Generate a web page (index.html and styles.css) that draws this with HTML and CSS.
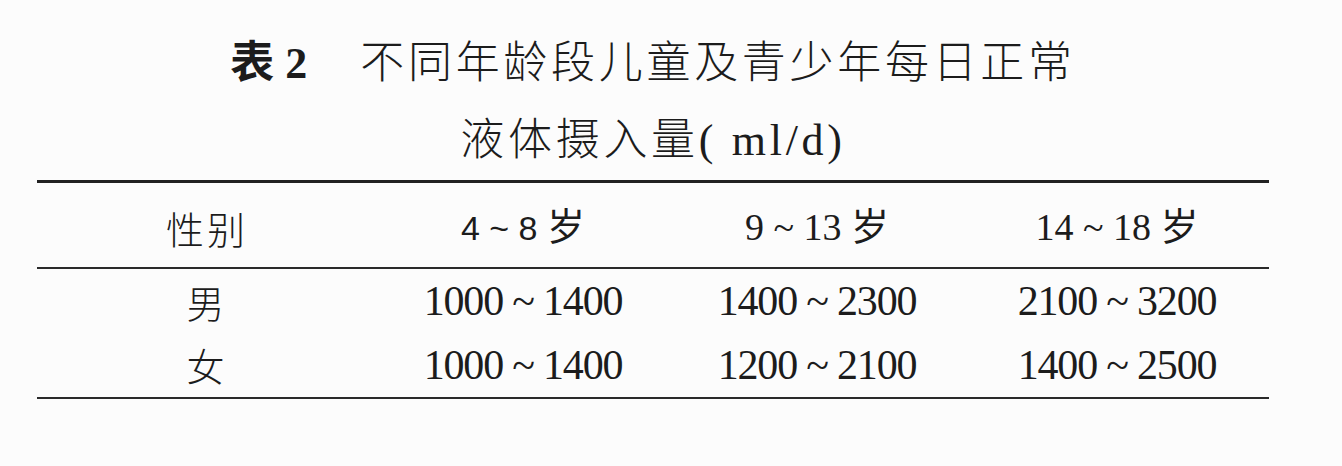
FILE: index.html
```html
<!DOCTYPE html>
<html lang="zh-CN">
<head>
<meta charset="utf-8">
<title>表2 不同年龄段儿童及青少年每日正常液体摄入量</title>
<link rel="stylesheet" href="styles.css">
</head>
<body>
<div class="page">
  <div class="caption">
    <div class="caption-line"><span class="label"><span class="label-cjk">表</span> 2</span><span class="caption-text">不同年龄段儿童及青少年每日正常</span></div>
    <div class="caption-line"><span class="caption-text">液体摄入量</span><span class="unit">( ml/d)</span></div>
  </div>
  <div class="table">
    <div class="row head">
      <div class="cell cjk">性别</div>
      <div class="cell"><span class="sans">4 ~ 8</span> 岁</div>
      <div class="cell">9 ~ 13 岁</div>
      <div class="cell">14 ~ 18 岁</div>
    </div>
    <div class="row body first">
      <div class="cell cjk">男</div>
      <div class="cell">1000 ~ 1400</div>
      <div class="cell">1400 ~ 2300</div>
      <div class="cell">2100 ~ 3200</div>
    </div>
    <div class="row body">
      <div class="cell cjk">女</div>
      <div class="cell">1000 ~ 1400</div>
      <div class="cell">1200 ~ 2100</div>
      <div class="cell">1400 ~ 2500</div>
    </div>
  </div>
</div>
</body>
</html>
```

FILE: styles.css
```css
html, body {
  margin: 0;
  padding: 0;
  background: #fcfcfc;
}

body {
  color: #1c1c1c;
  font-family: "Liberation Serif", "Noto Sans CJK SC", serif;
}

.page {
  width: 1232px;
  margin-left: 37px;
  padding-top: 21px;
}

.caption {
  text-align: center;
  font-size: 44px;
  margin-bottom: 5px;
}

.caption-line {
  white-space: nowrap;
  height: 77px;
  line-height: 77px;
  overflow: visible;
}

.label {
  font-weight: bold;
  margin-right: 53px;
}

.label-cjk {
  font-family: "Noto Sans CJK SC", sans-serif;
  font-weight: bold;
}

.caption-text {
  font-family: "Noto Sans CJK SC", sans-serif;
  font-weight: 300;
  letter-spacing: 3.7px;
}

.unit {
  letter-spacing: 3.7px;
}

.table {
  border-top: 3px solid #222;
  border-bottom: 2px solid #2a2a2a;
}

.row {
  display: grid;
  grid-template-columns: 340px 292px 296px 304px;
  align-items: center;
}

.row.head {
  height: 86px;
  padding-top: 5px;
  box-sizing: border-box;
  border-bottom: 2px solid #2a2a2a;
  font-size: 38px;
  line-height: 1.2;
}

.row.body {
  height: 64px;
  font-size: 42px;
  line-height: 1.2;
  letter-spacing: -1.2px;
}

.row.body.first {
  padding-top: 1px;
  box-sizing: border-box;
}

.cell {
  text-align: center;
  white-space: nowrap;
}

.cjk {
  font-family: "Noto Sans CJK SC", sans-serif;
  font-weight: 300;
  font-size: 38px;
  letter-spacing: 3px;
}

.sans {
  font-family: "Liberation Sans", sans-serif;
  font-size: 34px;
}
```
